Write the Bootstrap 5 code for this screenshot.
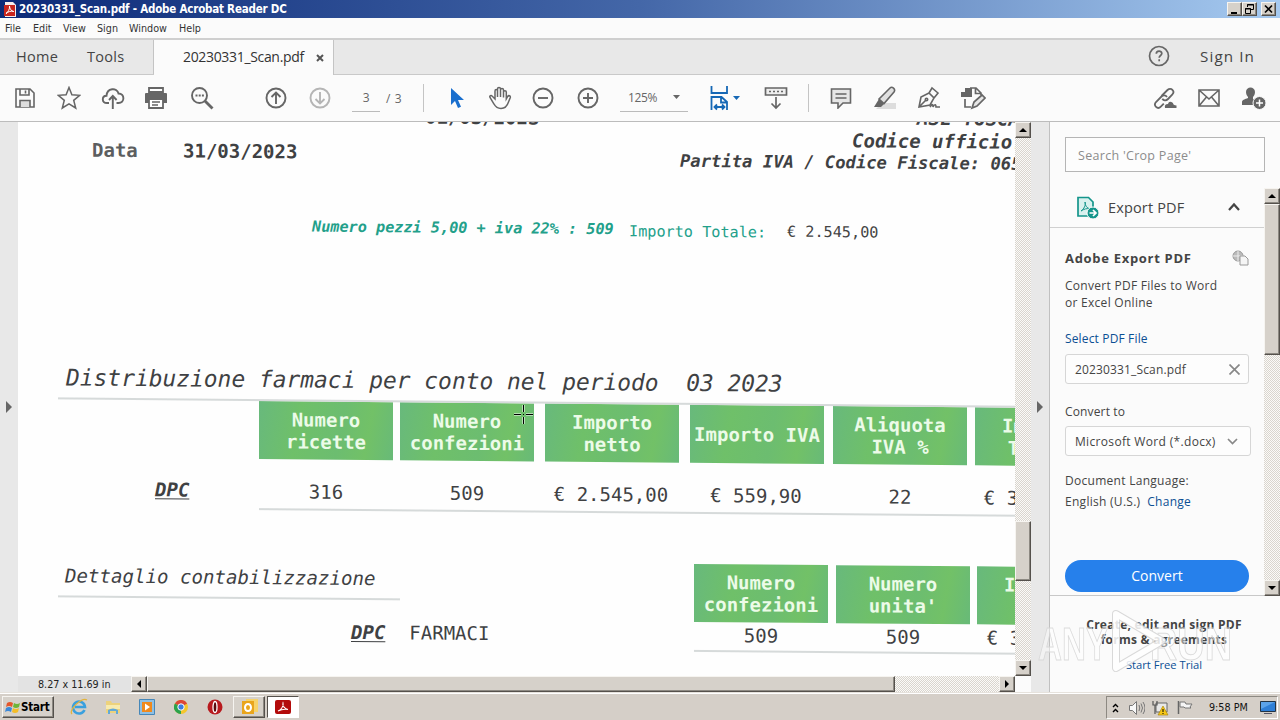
<!DOCTYPE html>
<html lang="en">
<head>
  <meta charset="UTF-8">
  <meta name="viewport" content="width=device-width, initial-scale=1.0">
  <title>20230331_Scan.pdf - Adobe Acrobat Reader DC</title>
  <link href="https://cdn.jsdelivr.net/npm/bootstrap@5.3.2/dist/css/bootstrap.min.css" rel="stylesheet">
  <script src="https://cdn.jsdelivr.net/npm/bootstrap@5.3.2/dist/js/bootstrap.bundle.min.js"></script>
  <style>
    body {
      width: 1280px;
      height: 720px;
      overflow: hidden;
      background: #fbfbfb;
      color: #444;
      font-family: "Open Sans", "Noto Sans", sans-serif;
      font-size: 12px;
      line-height: 17px;
    }

    svg { display: block; flex-shrink: 0; }
    .tahoma { font-family: "DejaVu Sans Condensed", "DejaVu Sans", sans-serif; }

    /* title bar and menu */
    .titlebar {
      height: 18px;
      padding: 0 4px 0 4px;
      background: linear-gradient(90deg, #0c2a78, #4467a8 50%, #a6caf0);
      color: #fff;
      font-size: 11.5px;
      line-height: 17px;
    }
    .titlebar b { margin-left: 2px; letter-spacing: -.21px; }
    .bevel {
      background: #d6d1ca;
      border: 1px solid;
      border-color: #f6f4f0 #55514c #55514c #f6f4f0;
      box-shadow: inset -1px -1px #8d8982;
    }
    .winbtn { width: 15px; height: 14px; }
    .menubar { height: 20px; padding-left: 5px; font-size: 10.7px; line-height: 21px; color: #333; }

    /* tab strip */
    .tabstrip { height: 37px; background: #e8e8e8; border-top: 2px solid #cfcfcf; border-bottom: 1px solid #c9c9c9; font-size: 14.5px; line-height: 33px; }
    .home-tabs { width: 154px; padding-left: 16px; border-right: 1px solid #c4c4c4; letter-spacing: .3px; }
    .doc-tab { width: 180px; height: 35px; padding-left: 29px; margin-bottom: -1px; background: #fbfbfb; border-right: 1px solid #c4c4c4; color: #333; box-shadow: 0 1px #fbfbfb; }
    .doc-tab span { width: 133px; font-size: 14px; line-height: 30px; padding-bottom: 2px; letter-spacing: -.33px; }
    .sign-in { padding-left: 30px; font-size: 15.2px; letter-spacing: 1.1px; }

    /* toolbar */
    .toolbar { height: 47px; border-bottom: 1px solid #bcbcbc; color: #666; padding-left: 3px; }
    .slot { width: 44px; display: flex; justify-content: center; flex-shrink: 0; }
    .vline { width: 1px; height: 28px; background: #c4c4c4; }
    .field { height: 27px; border-bottom: 1px solid #bbb; line-height: 26px; letter-spacing: -.4px; }
    .page-field { width: 28px; margin-left: 10px; text-align: center; }
    .zoom-field { width: 68px; margin-left: 10px; padding-left: 8px; }

    /* main area */
    .viewer { height: 570px; }
    .side-strip { width: 18px; background: #e8e8e8; }
    .doc-pane { width: 997px; }
    .page-view { height: 554px; overflow: hidden; background: #fefefe; }
    .track { background: repeating-conic-gradient(#fbfaf8 0 25%, #d9d5ce 0 50%) 0 0 / 2px 2px; }
    .vscroll { width: 16px; }
    .sbtn { width: 16px; height: 16px; flex-shrink: 0; display: flex; align-items: center; justify-content: center; }
    .statusbar { height: 16px; }
    .page-size { width: 113px; background: #e3e3e3; padding-left: 20px; font-size: 10.7px; line-height: 18px; color: #222; }

    /* scanned sheet: fed slightly crooked, so every row slopes down to the right */
    .sheet {
      width: 1180px;
      height: 554px;
      transform: skewY(.5deg);
      transform-origin: 0 0;
      font: 19px/24px "DejaVu Sans Mono", monospace;
      color: #3f4143;
    }
    .sheet-head { height: 90px; }
    .dates { width: 640px; }
    .issuer { width: 540px; font-weight: bold; font-style: italic; }
    .totals { height: 149px; font-size: 15.2px; color: #22a08a; line-height: 24px; }
    .heading { height: 36px; padding-left: 48px; font-size: 22.9px; line-height: 32px; font-style: italic; white-space: pre; }
    .heading-sm { height: 37px; padding: 6px 0 0 47px; font-size: 19.1px; font-style: italic; }
    .rule { height: 2px; background: #d6dada; filter: blur(.6px); }
    .th-cell {
      width: 134px;
      height: 58px;
      flex-shrink: 0;
      display: flex;
      align-items: center;
      justify-content: center;
      text-align: center;
      background: linear-gradient(100deg, #68b97c, #6fc069 30%, #6cbd70 60%, #72c167 80%, #68ba78);
      color: #ecfbe8;
      font-weight: bold;
      line-height: 22px;
    }
    .td-cell { width: 134px; flex-shrink: 0; text-align: center; white-space: nowrap; }
    .dpc { font-weight: bold; font-style: italic; text-decoration: underline; text-underline-offset: 2px; }
    .crosshair { left: 514px; top: 405px; }

    /* right panel */
    .tools-pane { width: 231px; border-left: 1px solid #c0c0c0; background: #fbfbfb; }
    .search-box { width: 200px; height: 35px; margin: 15px 0 16px 15px; border: 1px solid #b5b5b5; padding-left: 12px; line-height: 35px; font-size: 12.5px; letter-spacing: .3px; color: #8c8c8c; background: #fdfdfd; }
    .tool-scroll { height: 408px; }
    .tool-body { width: 214px; border-bottom: 1px solid #c8c8c8; }
    .tool-head { height: 40px; padding: 0 23px 0 26px; border-bottom: 1px solid #d0d0d0; font-size: 14.5px; }
    .tool-form { padding: 22px 15px 0 15px; letter-spacing: .28px; }
    .link-blue { color: #0b4f94; }
    .pick { height: 30px; border: 1px solid #d6d6d6; border-radius: 3px; padding: 0 8px 0 9px; background: #fdfdfd; }
    .convert-btn { width: 184px; height: 32px; padding: 0; border: 0; border-radius: 16px; background: #2680eb; color: #fff; font-size: 14px; line-height: 32px; letter-spacing: 0; }
    .promo { width: 198px; margin-left: 15px; padding-top: 21px; line-height: 15px; }
    .promo b { letter-spacing: .25px; }
    .watermark { left: 1036px; top: 606px; opacity: .85; }

    /* taskbar */
    .taskbar { height: 28px; background: #d5cfc8; border-top: 1px solid #e6e2dc; box-shadow: inset 0 1px #fff; padding: 3px 2px 0 2px; }
    .start-btn { width: 52px; height: 22px; padding-left: 2px; color: #000; font-size: 11.5px; letter-spacing: -.2px; }
    .task-slot { width: 34px; display: flex; justify-content: center; }
    .task-btn { width: 32px; height: 22px; display: flex; align-items: center; justify-content: center; }
    .task-active { background: #fff; border: 1px solid; border-color: #55514c #fff #fff #55514c; }
    .tray { width: 172px; height: 23px; border: 1px solid; border-color: #8d8982 #fff #fff #8d8982; color: #111; font-size: 11px; }
  </style>
</head>
<body class="d-flex flex-column position-relative">

  <header class="titlebar tahoma d-flex align-items-center">
    <svg width="13" height="15" viewBox="0 0 13 15"><path d="M1 0h8l3 3v12H1z" fill="#f7eeee"/><path d="M0 3h11v11H0z" fill="#c8261e"/><path d="M2 12c2-2 4-5 3.500-8M5.500 4c0 3 2 5 4 5.500M2 11c2-1 5-2.500 8-1.500" fill="none" stroke="#fff"/></svg>
    <b>20230331_Scan.pdf - Adobe Acrobat Reader DC</b>
    <div class="d-flex ms-auto">
      <div class="bevel winbtn"><svg width="13" height="12"><path d="M3 9h6v2H3z" fill="#000"/></svg></div>
      <div class="bevel winbtn"><svg width="13" height="12" fill="none" stroke="#000"><path d="M4.500 4V1.500h6v5H8M4 2h7M2.500 5.500h5v5h-5zM2 6h6"/></svg></div>
      <div class="bevel winbtn ms-1"><svg width="13" height="12"><path d="M3 2.500l7 7M10 2.500l-7 7" stroke="#000" stroke-width="1.700"/></svg></div>
    </div>
  </header>

  <nav class="menubar tahoma d-flex">
    <span style="width:28px">File</span><span style="width:30px">Edit</span><span style="width:34px">View</span><span style="width:32px">Sign</span><span style="width:50px">Window</span><span>Help</span>
  </nav>

  <div class="tabstrip d-flex flex-shrink-0">
    <div class="home-tabs d-flex"><span style="width:71px">Home</span><span>Tools</span></div>
    <div class="doc-tab d-flex align-items-center">
      <span>20230331_Scan.pdf</span>
      <svg width="8" height="8"><path d="M1 1l6 6M7 1l-6 6" stroke="#555" stroke-width="2"/></svg>
    </div>
    <div class="d-flex ms-auto" style="padding:5px 25px 0 0">
      <svg width="22" height="22" viewBox="0 0 22 22" fill="none" stroke="#666" stroke-width="1.700"><circle cx="11" cy="11" r="9.500"/><path d="M8.300 8.800c0-3.500 5.500-3.500 5.500-.3 0 2-2.600 2-2.600 4.200M11.200 14.300v2"/></svg>
      <span class="sign-in" style="line-height:23px">Sign In</span>
    </div>
  </div>

  <div class="toolbar d-flex align-items-center flex-shrink-0">
    <!-- file actions -->
    <div class="slot"><svg width="22" height="22" viewBox="0 0 22 22" fill="none" stroke="#666" stroke-width="1.600"><path d="M2 2h14l4 4v14H2zM6 2v6h9V2M11.500 3.500v3"/><path d="M6 20v-6.500h10V20" fill="#ddd"/></svg></div>
    <div class="slot"><svg width="24" height="24" viewBox="0 0 24 24" fill="none" stroke="#666" stroke-width="1.500"><path d="M12 1.500l2.900 7.300 7.800.5-6 5 2 7.700-6.700-4.200L5.300 22l2-7.700-6-5 7.800-.5z"/></svg></div>
    <div class="slot"><svg width="24" height="22" viewBox="0 0 24 22" fill="none" stroke="#666" stroke-width="1.900"><path d="M8 16H6C.5 16 .5 9 5.500 8.800 6 1 16 0 17.500 6.500c6.500 0 6.500 9.500 0 9.500H15.500M11.800 22V9.500M8 13l3.800-4 3.800 4"/></svg></div>
    <div class="slot" style="width:42px"><svg width="24" height="22" viewBox="0 0 24 22"><path d="M5 1h14v4H5z" fill="#fff" stroke="#666" stroke-width="1.800"/><path d="M1 7q0-1 1-1h20q1 0 1 1v9H1z" fill="#666"/><path d="M5 12h14v9H5z" fill="#fff" stroke="#666" stroke-width="1.800"/><path d="M8 15h8M8 18h6" stroke="#666" stroke-width="1.300"/></svg></div>
    <div class="slot" style="width:50px"><svg width="24" height="24" viewBox="0 0 24 24" fill="none" stroke="#666" stroke-width="1.900"><circle cx="9.500" cy="9.500" r="7.500"/><path d="M15 15l7.500 7.500" stroke-width="2.800"/><path d="M5.500 9.500h2M8.700 9.500h2M11.900 9.500h2"/></svg></div>
    <div class="slot" style="margin-left:27px"><svg width="22" height="22" viewBox="0 0 22 22" fill="none" stroke="#666" stroke-width="1.900"><circle cx="11" cy="11" r="9.500"/><path d="M11 17V6M6.500 10L11 5.500l4.500 4.500"/></svg></div>
    <div class="slot"><svg width="22" height="22" viewBox="0 0 22 22" fill="none" stroke="#b5b5b5" stroke-width="1.900"><circle cx="11" cy="11" r="9.500"/><path d="M11 5v11M6.500 12l4.500 4.500 4.500-4.500"/></svg></div>
    <div class="field page-field">3</div>
    <div style="width:43px;padding-left:6px;letter-spacing:.6px">/ 3</div>
    <div class="vline"></div>

    <!-- selection and zoom -->
    <div class="slot" style="margin-left:11px"><svg width="16" height="22" viewBox="0 0 16 22"><path d="M2 1v17l4-4 3 7 3-1.300-3-6.700h6z" fill="#1a6fce"/></svg></div>
    <div class="slot" style="width:42px"><svg width="24" height="24" viewBox="0 0 24 24" fill="none" stroke="#666" stroke-width="1.500"><path d="M7 13V5c0-2 2.500-2 2.500 0v6-8c0-2 3-2 3 0v8-7c0-2 3-2 3 0v7.500V6c0-1.800 2.800-1.800 2.800 0v7l1.400-2.500c1-1.600 3-.7 2.600 1L20.500 16c-1.300 4-3 6.500-7.500 6.500-4 0-5.500-1.700-7-4.500L2 11.500c-.8-1.700 1-2.500 2.300-1.300z"/></svg></div>
    <div class="slot"><svg width="22" height="22" viewBox="0 0 22 22" fill="none" stroke="#666" stroke-width="1.900"><circle cx="11" cy="11" r="9.500"/><path d="M6 11h10"/></svg></div>
    <div class="slot" style="margin-left:1px"><svg width="22" height="22" viewBox="0 0 22 22" fill="none" stroke="#666" stroke-width="1.900"><circle cx="11" cy="11" r="9.500"/><path d="M6 11h10M11 6v10"/></svg></div>
    <div class="field zoom-field d-flex align-items-center"><span style="width:45px">125%</span><svg width="8" height="5"><path d="M0 0h7L3.500 4z" fill="#666"/></svg></div>
    <div class="slot" style="width:56px;padding-left:18px"><svg width="34" height="26" viewBox="0 0 34 26" fill="none" stroke="#1668b5" stroke-width="1.800"><path d="M3.500 1v7h15.500V1M3.500 25V12h10l5.500 5v8M13 12v5.500h6M7 22h9M9 19.500L6.500 22 9 24.500M14 19.500l2.500 2.500-2.500 2.500"/><path d="M25 11h7l-3.500 4z" fill="#1668b5" stroke="none"/></svg></div>
    <div class="slot" style="margin-left:10px"><svg width="24" height="24" viewBox="0 0 24 24" fill="none" stroke="#666" stroke-width="1.700"><path d="M1.500 2h21v7h-21z" fill="#eee"/><path d="M12 11v11M7.500 17.500L12 22l4.500-4.500"/><path d="M5 5.500h14" stroke-dasharray="2 2"/></svg></div>
    <div class="vline" style="margin-left:10px"></div>

    <!-- comment tools -->
    <div class="slot" style="margin-left:10px"><svg width="22" height="22" viewBox="0 0 22 22" stroke="#666" stroke-width="1.600"><path d="M1.500 2h19v14H13l-5 5v-5H1.500z" fill="#e6e6e6"/><path d="M5.500 7h11M5.500 11h11" stroke-width="1.300"/></svg></div>
    <div class="slot"><svg width="24" height="24" viewBox="0 0 24 24"><path d="M9 17h14v6H3z" fill="#ddd"/><path d="M6 13L17 2c2-2 6 1 4 4L11 17.500z" fill="#e0e0e0" stroke="#666" stroke-width="1.600"/><path d="M6 13l5 5-3 3H1z" fill="#666"/></svg></div>
    <div class="slot"><svg width="24" height="24" viewBox="0 0 24 24" fill="none" stroke="#666" stroke-width="1.600"><path d="M2 21L4 11l8-4 5 5-4 7zM2 21l7-7M12 7l3-5 6 5-4 5"/><circle cx="9.500" cy="13.500" r="1.200"/><path d="M13 21c3-5 3-1 3 0 2-4 3-2 3 0h4"/></svg></div>
    <div class="slot"><svg width="26" height="24" viewBox="0 0 26 24" fill="none" stroke="#666" stroke-width="1.700"><path d="M10 2h6l5 5v2M15.500 2v5.500H21M5 13v8h6"/><path d="M1 6h4V2h7v9H1z" fill="#666" stroke="none"/><path d="M12 22l2-6 8-7 3 3-8 8z" fill="#e6e6e6"/></svg></div>

    <!-- share -->
    <div class="slot ms-auto"><svg width="24" height="24" viewBox="0 0 24 24" fill="none" stroke="#666" stroke-width="1.800"><path d="M8.500 10l6-6c3.500-3.500 8 1.300 4.700 4.700L15 13c-2 2-4.500 1.500-5.700-.3M14 11c-1.500-2.300-4-2-5.500-.5L3 16c-3 3.500 1.500 8 4.800 4.700l3-3"/><path d="M12 22q-1-4 3-4 1-4 5-1 0 2 3.500 2.500V22z" fill="#666" stroke="none"/></svg></div>
    <div class="slot"><svg width="22" height="18" viewBox="0 0 22 18" fill="none" stroke="#666" stroke-width="1.600"><path d="M1 1h20v16H1zM1 1l10 9L21 1M1 17l7.500-9M21 17l-7.500-9"/></svg></div>
    <div class="slot" style="margin-right:5px"><svg width="25" height="24" viewBox="0 0 25 24"><path d="M5 6c0-6 9-6 9 0 0 2-1 4-2 5v2c2 1 2 1 2 4l-1 2H1v-3c0-2 3-3 6-4v-1C6 10 5 8 5 6z" fill="#666"/><circle cx="18.500" cy="17" r="6.500" fill="#666" stroke="#fbfbfb"/><path d="M15 17h7M18.500 13.500v7" stroke="#fff" stroke-width="1.500"/></svg></div>
  </div>

  <main class="viewer d-flex flex-shrink-0">
    <div class="side-strip d-flex align-items-center ps-1"><svg width="9" height="12"><path d="M2 0l6 6-6 6z" fill="#666"/></svg></div>

    <div class="doc-pane">
      <div class="page-view">
        <div class="sheet">
          <div class="sheet-head d-flex">
            <div class="dates fw-bold">
              <div style="margin-top:-21px;padding-left:407px">01/03/2023</div>
              <div class="d-flex" style="margin-top:12px;padding-left:74px"><span style="width:91px;color:#5c5e60">Data</span><span>31/03/2023</span></div>
            </div>
            <div class="issuer">
              <div style="margin-top:-24px;padding-left:259px">ASL TOSCANA SUD</div>
              <div style="margin-top:-1px;padding-left:194px">Codice ufficio: UF</div>
              <div style="font-size:17.200px;margin-top:-2px;padding-left:22px">Partita IVA / Codice Fiscale: 0650</div>
            </div>
          </div>
          <div class="totals d-flex"><b class="fst-italic" style="padding-left:294px;width:611px">Numero pezzi 5,00 + iva 22% : 509</b><span style="width:158px;padding-top:2px">Importo Totale:</span><span style="color:#444;padding-top:1px">€ 2.545,00</span></div>
          <div class="heading">Distribuzione farmaci per conto nel periodo  03 2023</div>
          <div class="rule" style="margin-left:40px"></div>
          <div class="d-flex" style="padding-left:241px">
            <div class="th-cell">Numero<br>ricette</div>
            <div class="th-cell" style="margin-left:7px">Numero<br>confezioni</div>
            <div class="th-cell" style="margin-left:11px">Importo<br>netto</div>
            <div class="th-cell" style="margin-left:11px">Importo IVA</div>
            <div class="th-cell" style="margin-left:9px">Aliquota<br>IVA %</div>
            <div class="th-cell" style="margin-left:8px">Importo<br>Totale</div>
          </div>
          <div class="d-flex" style="padding-top:20px;height:49px">
            <div style="width:241px;padding-left:137px;margin-top:-1px"><span class="dpc">DPC</span></div>
            <div class="td-cell">316</div>
            <div class="td-cell" style="margin-left:7px">509</div>
            <div class="td-cell" style="margin-left:10px">€ 2.545,00</div>
            <div class="td-cell" style="margin-left:11px">€ 559,90</div>
            <div class="td-cell" style="margin-left:10px">22</div>
            <div class="td-cell" style="margin-left:7px">€ 3.104,90</div>
          </div>
          <div class="rule" style="margin-left:241px"></div>

          <div class="d-flex" style="padding-top:50px">
            <div style="width:676px">
              <div class="heading-sm">Dettaglio contabilizzazione</div>
              <div class="rule" style="margin-left:40px;width:342px"></div>
              <div style="padding:20px 0 0 333px"><span class="dpc">DPC</span><span style="margin-left:24px">FARMACI</span></div>
            </div>
            <div>
              <div class="d-flex">
                <div class="th-cell">Numero<br>confezioni</div>
                <div class="th-cell" style="margin-left:8px">Numero<br>unita'</div>
                <div class="th-cell" style="margin-left:7px">Importo<br>&nbsp;</div>
              </div>
              <div class="d-flex" style="height:28px;line-height:26px">
                <div class="td-cell">509</div>
                <div class="td-cell" style="margin-left:8px">509</div>
                <div class="td-cell" style="margin-left:7px">€ 3.104,90</div>
              </div>
              <div class="rule"></div>
            </div>
          </div>
        </div>
      </div>
      <div class="statusbar d-flex">
        <div class="page-size tahoma">8.27 x 11.69 in</div>
        <div class="track d-flex flex-fill">
          <div class="sbtn bevel"><svg width="5" height="8"><path d="M4 0v8L0 4z"/></svg></div>
          <div class="bevel" style="width:748px"></div>
          <div class="sbtn bevel ms-auto"><svg width="5" height="8"><path d="M0 0v8l4-4z"/></svg></div>
        </div>
      </div>
    </div>

    <div class="vscroll">
      <div class="track d-flex flex-column" style="height:554px">
        <div class="sbtn bevel"><svg width="8" height="5"><path d="M0 4h8L4 0z"/></svg></div>
        <div class="bevel" style="height:60px;margin-top:383px"></div>
        <div class="sbtn bevel mt-auto"><svg width="8" height="5"><path d="M0 0h8L4 4z"/></svg></div>
      </div>
    </div>
    <div class="side-strip d-flex align-items-center ps-1"><svg width="9" height="12"><path d="M2 0l6 6-6 6z" fill="#666"/></svg></div>

    <aside class="tools-pane">
      <div class="search-box">Search 'Crop Page'</div>
      <div class="tool-scroll d-flex">
        <div class="tool-body">
          <div class="tool-head d-flex align-items-center">
            <svg width="24" height="24" viewBox="0 0 24 24" fill="none" stroke="#14958b" stroke-width="1.700"><path d="M2 1.500h10.500L17 6v14H2z" fill="#d8f1ee"/><path d="M5 15c3-2 5-6 4-9 0 4 2 6 5 7-3-1-6 0-9 2z" stroke-width="1"/><circle cx="17" cy="17" r="6" fill="#14958b" stroke="#fbfbfb" stroke-width="1"/><path d="M13.500 17h6M17 14l3 3-3 3" stroke="#fff"/></svg>
            <span style="margin-left:8px;letter-spacing:.15px">Export PDF</span>
            <svg class="ms-auto" width="14" height="12" fill="none" stroke="#444" stroke-width="2.200"><path d="M2 8l5-5.500L12 8"/></svg>
          </div>
          <div class="tool-form">
            <div class="d-flex justify-content-between">
              <b style="font-size:13px;letter-spacing:.7px">Adobe Export PDF</b>
              <svg width="17" height="16" viewBox="0 0 17 16" stroke="#999"><circle cx="6" cy="6" r="5" fill="#bbb"/><path d="M1 6h10M6 1v10" stroke="#eee"/><path d="M8 6h5l3 3v6H8z" fill="#f5f5f5"/></svg>
            </div>
            <div class="text-nowrap" style="padding-top:10px">Convert PDF Files to Word<br>or Excel Online</div>
            <div class="link-blue" style="padding-top:19px;letter-spacing:.15px">Select PDF File</div>
            <div class="pick d-flex align-items-center justify-content-between" style="margin-top:7px"><span style="letter-spacing:.15px">20230331_Scan.pdf</span><svg width="11" height="11"><path d="M.5.5l10 10M10.500.5l-10 10" stroke="#888" stroke-width="1.700"/></svg></div>
            <div style="padding-top:19px;letter-spacing:.15px">Convert to</div>
            <div class="pick d-flex align-items-center justify-content-between text-nowrap" style="margin:6px -2px 0 0;letter-spacing:.33px"><span style="padding-top:1px">Microsoft Word (*.docx)</span><svg class="me-1" width="11" height="7" fill="none"><path d="M1 1l4.500 4.500L10 1" stroke="#888" stroke-width="1.700"/></svg></div>
            <div style="padding-top:16px">Document Language:</div>
            <div style="padding-top:4px">English (U.S.) &nbsp;<span class="link-blue">Change</span></div>
            <button class="btn convert-btn" style="margin-top:50px">Convert</button>
          </div>
        </div>
        <div class="track vscroll d-flex flex-column">
          <div class="sbtn bevel"><svg width="8" height="5"><path d="M0 4h8L4 0z"/></svg></div>
          <div class="bevel" style="height:151px"></div>
          <div class="sbtn bevel mt-auto"><svg width="8" height="5"><path d="M0 0h8L4 4z"/></svg></div>
        </div>
      </div>
      <div class="promo text-center">
        <b>Create, edit and sign PDF<br>forms &amp; agreements</b>
        <div class="link-blue" style="padding-top:10px;font-size:11.200px">Start Free Trial</div>
      </div>
    </aside>
  </main>

  <footer class="taskbar d-flex tahoma">
    <button class="bevel start-btn d-flex align-items-center fw-bold">
      <svg width="16" height="15" viewBox="0 0 16 15"><path d="M2 3q3-2 6 0L7 7Q4 5 1 7z" fill="#e4572b"/><path d="M9 3q3 2 6 0l-1 4q-3 2-6 0z" fill="#6fb536"/><path d="M1 8q3-2 6 0l-1 4q-3-2-6 0z" fill="#3b88d8"/><path d="M8 8q3 2 6 0l-1 4q-3 2-6 0z" fill="#f4bd27"/></svg>Start
    </button>
    <div class="d-flex align-items-center" style="height:22px;padding-left:8px">
      <div class="task-slot"><svg width="18" height="18" viewBox="0 0 18 18" fill="none"><path d="M14.500 12A6 6 0 1 1 15 9H5" stroke="#3aa0de" stroke-width="2.600"/><path d="M2 16C-2 12 12-1 17 2" stroke="#e3b43c" stroke-width="1.300"/></svg></div>
      <div class="task-slot"><svg width="16" height="16" viewBox="0 0 16 16"><path d="M1 2h5l1 2h8v10H1z" fill="#edd27c"/><path d="M1 6h14v4H1z" fill="#f8ebae"/><path d="M3 15v-4q5-3 10 0v4h-2v-3H5v3z" fill="#63a9d6"/></svg></div>
      <div class="task-slot"><svg width="16" height="16" viewBox="0 0 16 16"><path d="M.5.5h15v15H.5z" fill="#8fc0e4" stroke="#4687b8"/><path d="M3 3h10v10H3z" fill="#f08a1d"/><path d="M6 4.500v7L11 8z" fill="#fff"/></svg></div>
      <div class="task-slot"><svg width="14" height="14" viewBox="0 0 14 14"><circle cx="7" cy="7" r="7" fill="#f4c62c"/><path d="M7 7L.9 3.500a7 7 0 0 1 12.200 0z" fill="#dd4637"/><path d="M7 7L.9 3.500A7 7 0 0 0 7 14z" fill="#2ba24c"/><circle cx="7" cy="7" r="3.200" fill="#3d7de0" stroke="#fff"/></svg></div>
      <div class="task-slot"><svg width="16" height="16" viewBox="0 0 16 16"><circle cx="8" cy="8" r="7.500" fill="#b81a1e"/><ellipse cx="8" cy="8" rx="2" ry="5.500" fill="#5b0b0d" stroke="#fff" stroke-width="1.300"/></svg></div>
    </div>
    <div class="bevel task-btn" style="margin-left:1px"><svg width="17" height="16" viewBox="0 0 17 16"><path d="M5 0h12v13H5z" fill="#f7d36a"/><path d="M1 2h12v13H1z" fill="#e9a51c"/><ellipse cx="7" cy="8.500" rx="3" ry="3.500" fill="none" stroke="#fff" stroke-width="2"/></svg></div>
    <div class="task-active task-btn" style="margin-left:2px"><svg width="16" height="14" viewBox="0 0 16 14"><rect width="16" height="14" rx="2" fill="#b30b0b"/><path d="M3 11c3-1 6-5 5-8-1 3 2 6 5 6.500-4-.8-7 0-10 1.500z" fill="none" stroke="#fff" stroke-width="1.100"/></svg></div>
    <div class="tray d-flex align-items-center ms-auto">
      <svg width="17" height="12" viewBox="0 0 17 12" fill="none" stroke="#000" stroke-width="1.400"><path d="M6 5l2.500-2.500L11 5M6 10l2.500-2.500L11 10"/></svg>
      <svg style="margin-left:5px" width="16" height="14" viewBox="0 0 16 14" stroke="#777"><path d="M.5 4.500h3l4-4v13l-4-4h-3z" fill="#f8f8f8"/><path d="M10 4q1.500 3 0 6M12 2.500q3 4.500 0 9M14 1q4 6 0 12" fill="none"/></svg>
      <svg style="margin-left:7px" width="17" height="16" viewBox="0 0 17 16"><path d="M4 3h11v9H4z" fill="#e8e8e8" stroke="#666"/><path d="M1 1v4h4V1M3 5v9" fill="none" stroke="#555" stroke-width="1.200"/><path d="M11 6l5 9H6z" fill="#f6c716" stroke="#a57d00" stroke-width=".6"/><path d="M11 9v3M11 13v1" stroke="#000"/></svg>
      <svg style="margin-left:8px" width="16" height="15" viewBox="0 0 16 15"><path d="M1.500 1v13" stroke="#666" stroke-width="1.500"/><path d="M3 2h5l1 2h6l-2 3 1 1H8L7 7H3z" fill="#f5f5f5" stroke="#777"/></svg>
      <span style="margin-left:16px;width:47px;font-size:10.700px">9:58 PM</span>
      <svg style="margin-left:4px" width="16" height="14" viewBox="0 0 16 14"><path d="M.5.5h15v10H.5z" fill="#2f7fd6" stroke="#234"/><path d="M1 1h14L1 8z" fill="#5ba3ea"/><path d="M4 12h8v1H4z" fill="#556"/></svg>
    </div>
  </footer>

  <!-- mouse pointer over the page -->
  <svg class="crosshair position-absolute" width="19" height="19" fill="none"><path d="M9.500 0v7M9.500 12v7M0 9.500h7M12 9.500h7" stroke="#fff" stroke-opacity=".5" stroke-width="3"/><path d="M9.500 0v7M9.500 12v7M0 9.500h7M12 9.500h7M9 9.500h1" stroke="#000"/></svg>

  <svg class="watermark position-absolute" width="200" height="68" viewBox="0 0 200 68" font-family="Liberation Sans, sans-serif" font-size="46" font-weight="bold">
    <g fill="#fff" fill-opacity=".5" stroke="#d6d6d6" stroke-width="1">
      <text x="2" y="54" textLength="70" lengthAdjust="spacingAndGlyphs">ANY</text>
      <text x="114" y="54" textLength="82" lengthAdjust="spacingAndGlyphs">RUN</text>
    </g>
    <path d="M80 8l46 27-46 27z" fill="none" stroke="#d4d4d4" stroke-width="8" stroke-linejoin="round"/>
    <path d="M80 8l46 27-46 27z" fill="none" stroke="#fff" stroke-width="6" stroke-linejoin="round"/>
  </svg>
</body>
</html>
